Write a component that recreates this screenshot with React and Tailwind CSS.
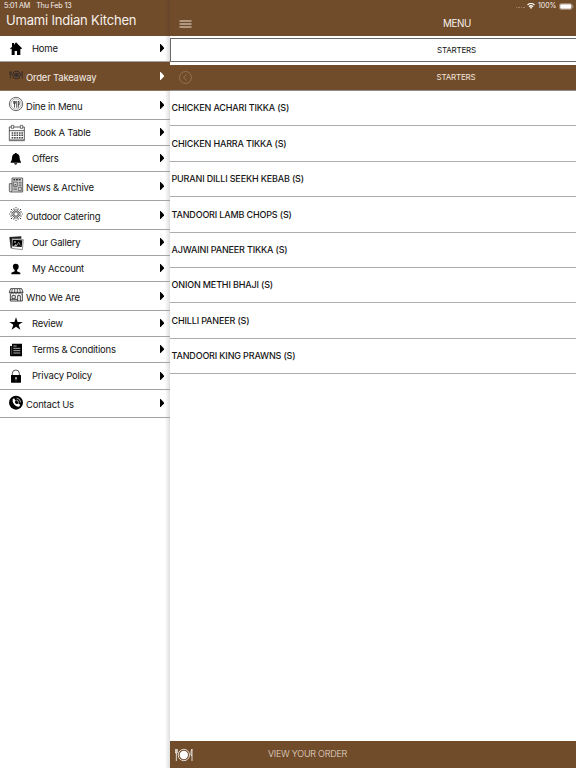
import React from "react";

const Svg = ({ children }) => (
  <svg width="18" height="18" viewBox="0 0 54 54" fill="none" stroke="none" className="block shrink-0">
    {children}
  </svg>
);

const HomeIcon = () => (
  <Svg>
    <path d="M6 26 L12 20 V9 H18 V14 L24 7 L42 25 L39 28 L37 26 V45 H27 V33 H20 V45 H11 V26 L8 28 Z" fill="#000" />
  </Svg>
);

const TakeawayIcon = () => (
  <Svg>
    <circle cx="25.5" cy="27" r="11.500" stroke="#2f2a28" strokeWidth="3" />
    <circle cx="25.5" cy="27" r="7" fill="#38302c" />
    <path d="M5 16v8q0 3 2.500 3t2.500-3v-8M7.500 16v22M43 38V16q-3 3-3 11h3" stroke="#38302c" strokeWidth="2.400" />
  </Svg>
);

const DineIcon = () => (
  <Svg>
    <circle cx="24" cy="27" r="20" stroke="#333" strokeWidth="2.200" />
    <circle cx="24" cy="27" r="15.500" stroke="#777" strokeWidth="1.600" />
    <path d="M17 18v6q0 3 2.500 3t2.500-3v-6M19.500 18v20M26 38V18M31 38V18q5 4 2 12h-2" stroke="#222" strokeWidth="2.200" />
  </Svg>
);

const CalendarIcon = () => (
  <Svg>
    <path d="M4 9h45v41H4zM4 20h45" stroke="#333" strokeWidth="2.400" />
    <path d="M10 4h7v9h-7zM37 4h7v9h-7z" fill="#fff" stroke="#333" strokeWidth="2" />
    <path d="M11 27h34M11 34h34M11 41h34" stroke="#444" strokeWidth="4.500" strokeDasharray="4.800 2.500" />
    <path d="M6 46h42" stroke="#333" strokeWidth="1.500" />
  </Svg>
);

const BellIcon = () => (
  <Svg>
    <path d="M23 9q3-1 4 2q8 2 8 13q0 8 4 12v2H8v-2q4-4 4-12q0-11 8-13q1-3 3-2ZM18 40h10q-1 4-5 4t-5-4Z" fill="#000" />
  </Svg>
);

const NewsIcon = () => (
  <Svg>
    <path d="M12 6h32v42H7q-3 0-3-4V23h8zM12 23v21q0 3-4 3" fill="#d8d8d8" stroke="#444" strokeWidth="2.400" />
    <path d="M16 11h24" stroke="#333" strokeWidth="4.500" strokeDasharray="6 2" />
    <path d="M16 18h12v13H16zM32 19h9M32 24h9M32 29h9M16 36h11M16 41h11M31 34h9v10h-9z" stroke="#444" strokeWidth="2.200" />
    <path d="M18 28l4-5 4 5z" fill="#444" />
  </Svg>
);

const BurstIcon = () => (
  <Svg>
    {Array.from({ length: 16 }, (_, i) => (
      <g key={i} transform={`rotate(${i * 22.5} 24 27)`}>
        <path d="M24 22V12" stroke="#222" strokeWidth="1.900" />
        <circle cx="24" cy={i % 2 ? 10.500 : 8} r="1.700" fill="#333" />
      </g>
    ))}
  </Svg>
);

const GalleryIcon = () => (
  <Svg>
    <path d="M4 9L40 7v7H13v28L8 43Z" fill="#222" />
    <path d="M12 14L46 17L43 47L11 43Z" fill="#fff" stroke="#333" strokeWidth="1.600" />
    <path d="M14 17L43 19L41 39L13 37Z" fill="#000" />
    <path d="M17 36l6-6 3 2 6-9 4 6 2 8z" fill="#aaa" />
    <path d="M26 37l6-11 6 12z" fill="#111" />
    <circle cx="21" cy="24" r="2.500" fill="#fff" />
  </Svg>
);

const PersonIcon = () => (
  <Svg>
    <path d="M23 11c-7 0-9 4-8 10s2 7 5 9v4l-10 4v5h27v-5l-10-4v-4c3-2 4-3 5-9s-2-10-9-10Z" fill="#000" />
  </Svg>
);

const StoreIcon = () => (
  <Svg>
    <path d="M8 8h33l4 11H4zM7 24v21h36V24M12 29h10v8H12zM29 45V29h8v16M7 40h22" stroke="#222" strokeWidth="2.500" />
    <path d="M4 19q4 10 8 0q4 10 8 0q4 10 8 0q4 10 8 0q5 10 9 0M13 9l-2 10M20 9v10M28 9v10M35 9l2 10" stroke="#222" strokeWidth="2.200" />
  </Svg>
);

const StarIcon = () => (
  <Svg>
    <path d="M24 7l4.800 14H44L32 29.500 37 44 24 35 11 44l5-14.500L4 21h15.200Z" fill="#000" />
  </Svg>
);

const TermsIcon = () => (
  <Svg>
    <path d="M12 8h30v38H9q-3 0-3-4V15h6z" fill="#000" />
    <path d="M11 16v25" stroke="#999" strokeWidth="1.500" />
    <path d="M16 15h10M16 22h21M16 29h21M16 36h21" stroke="#eee" strokeWidth="2.200" />
  </Svg>
);

const LockIcon = () => (
  <Svg>
    <path d="M13 25v-6q0-10 10.500-10T34 19v6" stroke="#222" strokeWidth="2.400" />
    <rect x="9" y="24" width="30" height="23" rx="1" fill="#000" />
    <path d="M21 31h6v4l-2 2v4h-2v-4l-2-2z" fill="#aaa" />
  </Svg>
);

const PhoneIcon = () => (
  <Svg>
    <circle cx="24" cy="26" r="21" fill="#000" />
    <path d="M14 16l4-3 5 7-3 4q2 5 7 7l4-3 6 5-4 5q-7 1-14-6t-5-16Z" fill="#fff" />
    <path d="M25 18q6 1 7 8M26 12q11 2 12 13" stroke="#fff" strokeWidth="2" />
  </Svg>
);

const items = [
  { label: "Home", icon: HomeIcon, row: "h-[26px]", text: "ml-[6px]" },
  { label: "Order Takeaway", icon: TakeawayIcon, row: "h-[29px]", tall: true, active: true },
  { label: "Dine in Menu", icon: DineIcon, row: "h-[29px]", tall: true },
  { label: "Book A Table", icon: CalendarIcon, row: "h-[26px]", text: "ml-[8px]" },
  { label: "Offers", icon: BellIcon, row: "h-[26px]", text: "ml-[6px]" },
  { label: "News & Archive", icon: NewsIcon, row: "h-[29px]", tall: true },
  { label: "Outdoor Catering", icon: BurstIcon, row: "h-[29px]", tall: true },
  { label: "Our Gallery", icon: GalleryIcon, row: "h-[26px]", text: "ml-[6px]" },
  { label: "My Account", icon: PersonIcon, row: "h-[26px]", text: "ml-[6px]" },
  { label: "Who We Are", icon: StoreIcon, row: "h-[29px]", tall: true },
  { label: "Review", icon: StarIcon, row: "h-[26px]", text: "ml-[6px]" },
  { label: "Terms & Conditions", icon: TermsIcon, row: "h-[26px]", text: "ml-[6px]" },
  { label: "Privacy Policy", icon: LockIcon, row: "h-[27px]", text: "ml-[6px]" },
  { label: "Contact Us", icon: PhoneIcon, row: "h-[28px]", tall: true },
];

const dishes = [
  "CHICKEN ACHARI TIKKA (S)",
  "CHICKEN HARRA TIKKA (S)",
  "PURANI DILLI SEEKH KEBAB (S)",
  "TANDOORI LAMB CHOPS (S)",
  "AJWAINI PANEER TIKKA (S)",
  "ONION METHI BHAJI (S)",
  "CHILLI PANEER (S)",
  "TANDOORI KING PRAWNS (S)",
];

function MenuRow({ item }) {
  const Icon = item.icon;
  return (
    <li
      className={`flex items-center border-b pl-2 pr-[5px] ${item.row} ${
        item.active ? "border-[#8d7562] bg-[#704c2b] text-[#f6eee8]" : "border-[#a3a3a3] text-[#151515]"
      }`}
    >
      <span className={item.tall ? "-mt-[2px]" : ""}>
        <Icon />
      </span>
      <span className={`whitespace-nowrap text-[9.500px] leading-3 tracking-[-0.210px] ${item.tall ? "mt-[3px]" : item.text}`}>
        {item.label}
      </span>
      <svg width="5" height="8" viewBox="0 0 5 8" className={`-mt-px ml-auto ${item.active ? "fill-white" : "fill-black"}`}>
        <path d="M0 0H.6L4 3.600V4.400L.6 8H0Z" />
      </svg>
    </li>
  );
}

export default function App() {
  return (
    <div className="flex h-[768px] w-[576px] flex-col overflow-hidden bg-white font-['Inter','Liberation_Sans',sans-serif] text-[#151515]">
      <header className="flex h-9 shrink-0 bg-[#704c2b] text-[#f8f1eb]">
        <div className="w-[170px] shrink-0 bg-linear-to-r from-transparent from-[97%] to-[#67452a]">
          <div className="flex h-3 gap-[6px] pl-1 text-[7.200px] leading-3 tracking-[-0.180px]">
            <span>5:01 AM</span>
            <span>Thu Feb 13</span>
          </div>
          <h1 className="whitespace-nowrap pl-[6px] text-[13px] leading-4 tracking-[-0.190px]">Umami Indian Kitchen</h1>
        </div>
        <div className="min-w-0 flex-1">
          <div className="flex h-3 items-center justify-end gap-[2.500px] pr-[2px] text-[7px]">
            <span className="flex gap-px pt-[3px]">
              <i className="size-[1.500px] rounded-full bg-[#a48b76]" />
              <i className="size-[1.500px] rounded-full bg-[#a48b76]" />
              <i className="size-[1.500px] rounded-full bg-[#a48b76]" />
              <i className="size-[1.500px] rounded-full bg-[#a48b76]" />
            </span>
            <svg width="8" height="6" viewBox="0 0 16 12" fill="none" stroke="#fff" strokeWidth="2.400">
              <path d="M1 4q7-6 14 0M4 7.500q4-4 8 0" />
              <path d="M5.500 9q2.500-2 5 0L8 12Z" fill="#fff" stroke="none" />
            </svg>
            <span>100%</span>
            <svg width="15" height="7" viewBox="0 0 15 7">
              <rect x=".5" y=".5" width="12.500" height="6" rx="1.600" fill="none" stroke="#b39f8f" strokeWidth=".7" />
              <rect x="1.200" y="1.200" width="11.100" height="4.600" rx="1" fill="#fff" />
              <path d="M13.800 2.500v2" stroke="#b39f8f" />
            </svg>
          </div>
          <div className="flex h-6 w-[574px] items-center">
            <svg width="13" height="8" viewBox="0 0 13 8" className="ml-[9px] -mt-px shrink-0" stroke="#eee2d8" strokeWidth="1">
              <path d="M.5 1h12M.5 4h12M.5 7h12" />
            </svg>
            <h2 className="-ml-[22px] w-full shrink-0 pt-px text-center text-[9.800px] tracking-[-0.300px]">MENU</h2>
          </div>
        </div>
      </header>

      <div className="flex min-h-0 flex-1">
        <nav className="w-[170px] shrink-0">
          <div className="h-full bg-linear-to-r from-transparent from-[97%] to-[#dedede]">
            <ul>
              {items.map((item) => (
                <MenuRow key={item.label} item={item} />
              ))}
            </ul>
          </div>
        </nav>

        <main className="flex min-w-0 flex-1 flex-col overflow-hidden">
          <div className="w-[574px] shrink-0 pt-[2px]">
            <div className="flex h-[24px] items-center justify-center border border-[#686868] pr-px text-[8px] tracking-[-0.180px]">STARTERS</div>
          </div>
          <div className="mt-[2.500px] flex h-[26.500px] w-[574px] shrink-0 items-center border-b border-[#8d8d8d] bg-[#704c2b] text-[#f1e6dc]">
            <svg width="13" height="13" viewBox="0 0 13 13" className="ml-[9px] shrink-0" fill="none" stroke="#9b785a" strokeWidth=".8">
              <circle cx="6.500" cy="6.500" r="6" />
              <path d="M7.500 3.500L4.500 6.500L7.500 9.500" />
            </svg>
            <div className="-ml-[23px] w-full shrink-0 text-center text-[8px] tracking-[-0.180px]">STARTERS</div>
          </div>
          <ul className="flex-1">
            {dishes.map((dish) => (
              <li
                key={dish}
                className="flex h-[35.400px] items-center border-b border-[#adadad] pl-[1.500px] text-[9px] font-medium tracking-[-0.160px]"
              >
                {dish}
              </li>
            ))}
          </ul>
          <footer className="flex h-[27px] shrink-0 items-center bg-[#704c2b] text-[#e9dccf]">
            <svg width="18" height="14" viewBox="0 0 54 42" className="ml-[5px]" fill="none" stroke="#fff">
              <circle cx="26.500" cy="21" r="17" strokeWidth="2.400" />
              <circle cx="26.500" cy="21" r="12.500" fill="#fff" stroke="none" />
              <path d="M1 3v9q0 4 3 4t3-4V3M4 3v36M51 39V3q-4 5-3 19h3" strokeWidth="2.400" />
            </svg>
            <span className="-mt-px ml-[75px] text-[9px] font-light tracking-[-0.230px]">VIEW YOUR ORDER</span>
          </footer>
        </main>
      </div>
    </div>
  );
}
